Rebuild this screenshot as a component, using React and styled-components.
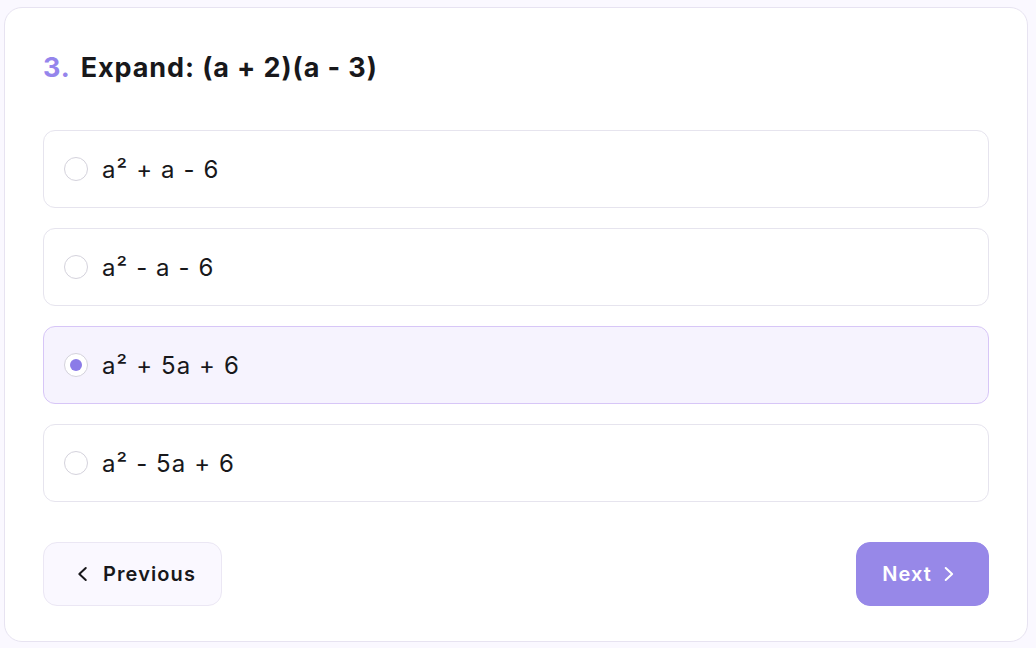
import styled, { createGlobalStyle } from "styled-components"
import { useState } from "react"

const Global = createGlobalStyle`
    html, body {
        margin: 0;
        padding: 0;
        background: #faf8ff;
        font-family: Inter, "Noto Sans", sans-serif;
        color: #18181b;
    }
`

const Page = styled.div`
    padding: 7px 0 0 4px;
`

const Card = styled.div`
    box-sizing: border-box;
    width: 1024px;
    height: 635px;
    background: #fff;
    border: 1px solid #e7e3f1;
    border-radius: 18px;
    padding: 42px 38px 0 38px;
    display: flex;
    flex-direction: column;
`

const Title = styled.h2`
    margin: 0 0 44px;
    font-size: 27px;
    line-height: 36px;
    font-weight: 700;
    letter-spacing: 0.9px;
    display: flex;
    gap: 10px;
`

const Num = styled.span`
    color: #9585ec;
`

const Options = styled.div`
    display: flex;
    flex-direction: column;
    gap: 20px;
`

const Option = styled.label`
    box-sizing: border-box;
    height: 78px;
    display: flex;
    align-items: center;
    gap: 14px;
    padding: 0 20px;
    border-radius: 12px;
    border: 1px solid ${({ selected }) => selected ? '#d7c6f7' : '#e6e4ee'};
    background: ${({ selected }) => selected ? '#f6f3fe' : '#fff'};
    font-size: 24px;
    letter-spacing: 1.1px;
    cursor: pointer;
`

const Radio = styled.span`
    box-sizing: border-box;
    width: 24px;
    height: 24px;
    border-radius: 50%;
    border: 1.5px solid #d4d2dc;
    background: #fff;
    display: flex;
    align-items: center;
    justify-content: center;

    &::after {
        content: "";
        width: 12px;
        height: 12px;
        border-radius: 50%;
        background: ${({ checked }) => checked ? '#8b7be8' : 'transparent'};
    }
`

const Footer = styled.div`
    margin-top: 40px;
    display: flex;
    justify-content: space-between;
`

const Button = styled.button`
    box-sizing: border-box;
    height: 64px;
    display: flex;
    align-items: center;
    gap: ${({ primary }) => primary ? '5px' : '9px'};
    padding: ${({ primary }) => primary ? '0 29px 0 25px' : '0 25px 0 28px'};
    border-radius: 14px;
    font-family: inherit;
    font-size: 20px;
    font-weight: 600;
    letter-spacing: 1.1px;
    border: 1px solid ${({ primary }) => primary ? '#9788e8' : '#ebe7f4'};
    background: ${({ primary }) => primary ? '#9788e8' : '#faf8ff'};
    color: ${({ primary }) => primary ? '#fff' : '#18181b'};
    cursor: pointer;
`

const Chevron = ({ dir }) => (
    <svg width="22" height="22" viewBox="0 0 24 24" fill="none" stroke="currentColor"
        strokeWidth="2.2" strokeLinecap="round" strokeLinejoin="round">
        {dir === 'left' ? <path d="M15 5.5L8 12l7 6.5" /> : <path d="M9.5 5.5L16.5 12l-7 6.5" />}
    </svg>
)

const answers = [
    'a² + a - 6',
    'a² - a - 6',
    'a² + 5a + 6',
    'a² - 5a + 6',
]

export default function App() {
    const [picked, setPicked] = useState(2)

    return (
        <Page>
            <Global />
            <Card>
                <Title>
                    <Num>3.</Num>
                    <span>Expand: (a + 2)(a - 3)</span>
                </Title>
                <Options>
                    {answers.map((a, i) => (
                        <Option key={i} selected={i === picked} onClick={() => setPicked(i)}>
                            <Radio checked={i === picked} />
                            <span>{a}</span>
                        </Option>
                    ))}
                </Options>
                <Footer>
                    <Button>
                        <Chevron dir="left" />
                        Previous
                    </Button>
                    <Button primary>
                        Next
                        <Chevron dir="right" />
                    </Button>
                </Footer>
            </Card>
        </Page>
    )
}
